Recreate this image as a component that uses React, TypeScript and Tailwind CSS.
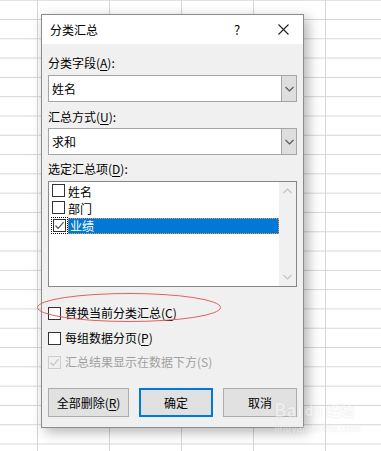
import React from 'react';

function Box({ checked, disabled, focus }: { checked?: boolean; disabled?: boolean; focus?: boolean }) {
  return (
    <span className={focus ? 'inline-flex shrink-0 border border-dotted border-black p-px' : 'inline-flex shrink-0'}>
      <span
        className={
          disabled
            ? 'inline-flex h-[13px] w-[13px] shrink-0 items-center justify-center border border-[#cccccc] bg-[#f0f0f0]'
            : 'inline-flex h-[13px] w-[13px] shrink-0 items-center justify-center border border-[#333333] bg-white'
        }
      >
        {checked && (
          <svg width="11" height="11" viewBox="0 0 11 11">
            <path d="M1.5 5.5 L4.2 8.3 L9.6 2.2" fill="none" stroke={disabled ? '#c4c4c4' : '#555555'} strokeWidth="1.2" />
          </svg>
        )}
      </span>
    </span>
  );
}

function Chevron({ up, color }: { up?: boolean; color: string }) {
  return (
    <svg width="9" height="6" viewBox="0 0 9 6">
      <path d={up ? 'M0.5 5 L4.5 1 L8.5 5' : 'M0.5 1 L4.5 5 L8.5 1'} fill="none" stroke={color} strokeWidth="1.1" />
    </svg>
  );
}

function Combo({ value }: { value: string }) {
  return (
    <div className="flex h-[27px] border border-[#a5a5a5] bg-white">
      <div className="flex flex-1 items-center pl-[3px] text-[12px] text-black">{value}</div>
      <div className="flex w-[15px] items-center justify-center border-l border-[#a5a5a5] bg-[#dedede]">
        <Chevron color="#555555" />
      </div>
    </div>
  );
}

function U({ c }: { c: string }) {
  return <span className="underline underline-offset-2">{c}</span>;
}

export default function App() {
  return (
    <div className="relative h-[451px] w-[381px] overflow-hidden bg-white bg-[linear-gradient(to_right,#d6d6d6_1px,transparent_1px),linear-gradient(to_bottom,#d6d6d6_1px,transparent_1px)] bg-[size:72px_19.3px] bg-[position:37px_19px] font-['Noto_Sans_CJK_SC','Microsoft_YaHei',sans-serif] text-[12px] leading-[16px] text-black">
      <div className="absolute left-[41px] top-[14px] flex h-[414px] w-[263px] flex-col border border-[#8c8c8c] bg-[#f0f0f0] shadow-[4px_4px_12px_rgba(0,0,0,0.3)]">
        <div className="flex h-[29px] items-center bg-white pl-[8px]">
          <span className="flex-1">分类汇总</span>
          <span className="w-[14px] text-center text-[13px]">?</span>
          <span className="ml-[33px] mr-[14px] flex w-[12px] items-center justify-center">
            <svg width="11" height="11" viewBox="0 0 11 11">
              <path d="M0.5 0.5 L10.5 10.5 M10.5 0.5 L0.5 10.5" stroke="#222" strokeWidth="1.1" />
            </svg>
          </span>
        </div>
        <div className="flex flex-col px-[6px]">
          <div className="mt-[11px]">分类字段(<U c="A" />):</div>
          <div className="mt-[4px]">
            <Combo value="姓名" />
          </div>
          <div className="mt-[7px]">汇总方式(<U c="U" />):</div>
          <div className="mt-[3px]">
            <Combo value="求和" />
          </div>
          <div className="mt-[6px]">选定汇总项(<U c="D" />):</div>
          <div className="mt-[4px] flex h-[106px] border border-[#828790] bg-white">
            <div className="flex flex-1 flex-col pt-px">
              <div className="flex h-[17px] items-center pl-[2px]">
                <span className="ml-px">
                  <Box />
                </span>
                <span className="ml-[3px]">姓名</span>
              </div>
              <div className="flex h-[17px] items-center pl-[2px]">
                <span className="ml-px">
                  <Box />
                </span>
                <span className="ml-[3px]">部门</span>
              </div>
              <div className="flex h-[17px] items-center pl-[2px]">
                <Box checked focus />
                <span className="flex h-[16px] flex-1 items-center border border-dotted border-[#f0a040] bg-[#0078d7] pl-px text-white">业绩</span>
              </div>
            </div>
            <div className="flex w-[17px] flex-col items-center justify-between bg-[#f0f0f0] py-[6px]">
              <Chevron up color="#c2c2c2" />
              <Chevron color="#c2c2c2" />
            </div>
          </div>
          <div className="mt-[18px] flex h-[16px] items-center">
            <Box />
            <span className="ml-[4px]">
              替换当前分类汇总(<U c="C" />)
            </span>
          </div>
          <div className="mt-[9px] flex h-[16px] items-center">
            <Box />
            <span className="ml-[4px]">
              每组数据分页(<U c="P" />)
            </span>
          </div>
          <div className="mt-[8px] flex h-[16px] items-center text-[#a0a0a0]">
            <Box checked disabled />
            <span className="ml-[4px]">汇总结果显示在数据下方(S)</span>
          </div>
          <div className="mt-[18px] flex h-[29px] items-stretch">
            <button className="flex w-[81px] items-center justify-center border border-[#adadad] bg-[#e1e1e1]">
              全部删除(<U c="R" />)
            </button>
            <button className="ml-[10px] flex w-[74px] items-center justify-center border-2 border-[#0078d7] bg-[#e1e1e1]">
              确定
            </button>
            <button className="ml-[10px] flex w-[74px] items-center justify-center border border-[#adadad] bg-[#e1e1e1]">
              取消
            </button>
          </div>
        </div>
      </div>

      <svg className="absolute left-[36px] top-[292px]" width="186" height="31" viewBox="0 0 186 31">
        <ellipse cx="93" cy="15.5" rx="91.5" ry="14" fill="none" stroke="#e06060" strokeWidth="1" />
      </svg>

      <div className="pointer-events-none absolute left-[274px] top-[400px] flex flex-col opacity-40">
        <div className="flex items-end">
          <span className="text-[18px] font-bold leading-[19px] text-white [text-shadow:0_0_1px_#9a9a9a]">Bai</span>
          <span className="ml-[2px] text-[14px] font-bold leading-[17px] text-white [text-shadow:0_0_1px_#9a9a9a]">du</span>
          <span className="ml-[4px] text-[14px] font-bold leading-[17px] text-white [text-shadow:0_0_1px_#9a9a9a]">经验</span>
        </div>
        <span className="mt-[3px] text-[10px] leading-[12px] text-white [text-shadow:0_0_1px_#aaaaaa]">jingyan.baidu.com</span>
      </div>
    </div>
  );
}
